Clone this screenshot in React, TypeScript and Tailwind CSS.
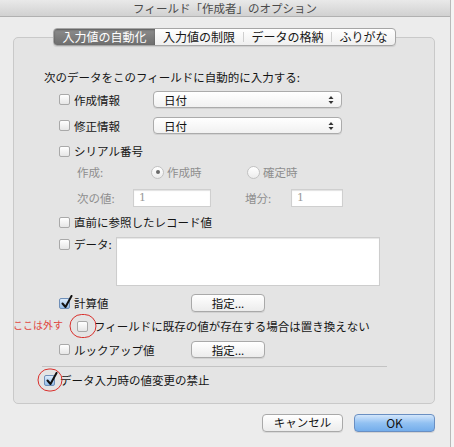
import React from "react";

const FONT = { fontFamily: '"Noto Sans CJK JP", "Noto Sans", sans-serif' };

function Check({ checked = false }: { checked?: boolean }) {
  return (
    <span
      className={
        "relative inline-block w-[11px] h-[11px] shrink-0 rounded-[2px] border " +
        (checked
          ? "border-[#6f8fb8] bg-linear-to-b from-[#dcebfb] to-[#93bdea]"
          : "border-[#a9a9a9] bg-linear-to-b from-white to-[#e6e6e6]")
      }
    >
      {checked && (
        <svg
          className="absolute left-[1px] top-[-4px]"
          width="12"
          height="14"
          viewBox="0 0 12 14"
        >
          <path d="M1.5 8.5 L4.5 12 L10.5 1" fill="none" stroke="#111" strokeWidth="2" strokeLinecap="round" strokeLinejoin="round" />
        </svg>
      )}
    </span>
  );
}

function Radio({ selected = false }: { selected?: boolean }) {
  return (
    <span className="relative inline-flex items-center justify-center w-[13px] h-[13px] shrink-0 rounded-full border border-[#c2c2c2] bg-linear-to-b from-white to-[#ececec]">
      {selected && <span className="w-[4px] h-[4px] rounded-full bg-[#6a6a6a]" />}
    </span>
  );
}

function Select({ value }: { value: string }) {
  return (
    <div className="flex items-center justify-between w-[189px] h-[17px] rounded-[4px] border border-[#ababab] bg-linear-to-b from-white to-[#f1f1f1] shadow-[0_1px_0_rgba(0,0,0,0.08)] pl-[10px] pr-[7px]">
      <span className="text-[11.5px] leading-[16px] text-[#111]">{value}</span>
      <svg width="6" height="10" viewBox="0 0 6 10">
        <path d="M3 1 L5.5 4 L0.5 4 Z" fill="#333" />
        <path d="M3 9 L5.5 6 L0.5 6 Z" fill="#333" />
      </svg>
    </div>
  );
}

function Field({ w }: { w: string }) {
  return (
    <div className={"h-[18px] bg-white border border-[#cfcfcf] shadow-[inset_0_1px_1px_rgba(0,0,0,0.12)] pl-[5px] flex items-center " + w}>
      <span className="text-[11px] text-[#9a9a9a]" style={{ fontFamily: '"DejaVu Serif", serif' }}>1</span>
    </div>
  );
}

function Btn({ label, w, h = "h-[18px]" }: { label: string; w: string; h?: string }) {
  return (
    <div className={"flex items-center justify-center rounded-[4px] border border-[#a9a9a9] bg-linear-to-b from-white to-[#ececec] shadow-[0_1px_0_rgba(0,0,0,0.08)] text-[11.5px] text-[#111] " + w + " " + h}>
      {label}
    </div>
  );
}

function Circle({ w, h }: { w: string; h: string }) {
  return (
    <span
      className={
        "absolute left-1/2 top-1/2 -translate-x-1/2 -translate-y-1/2 rounded-full border border-[#d9302c] " + w + " " + h
      }
    />
  );
}

export default function App() {
  return (
    <div className="w-[454px] h-[447px] bg-[#f4f4f4] text-[#151515] overflow-hidden" style={FONT}>
      <div className="w-[451px] h-[447px] bg-[#ececec] border-r border-[#b9b9b9] flex flex-col">
        {/* Title bar */}
        <div className="h-[17px] shrink-0 bg-linear-to-b from-[#e9e9e9] to-[#d1d1d1] border-b border-[#b1b1b1] flex items-center justify-center text-[11.5px] leading-[16px] text-[#4a4a4a]">
          フィールド「作成者」のオプション
        </div>

        {/* Tabs */}
        <div className="relative z-10 mt-[11px] -mb-[9px] ml-[53px] flex h-[18px] w-[343px] rounded-[4px] border border-[#a6a6a6] bg-linear-to-b from-white to-[#efefef] shadow-[0_1px_1px_rgba(0,0,0,0.1)] overflow-hidden text-[12px] leading-[16px]">
          <div className="w-[101px] flex items-center justify-center bg-linear-to-b from-[#8d8d8d] to-[#6e6e6e] text-white shadow-[inset_0_1px_2px_rgba(0,0,0,0.35)]">
            入力値の自動化
          </div>
          <div className="w-[88px] flex items-center justify-center text-[#161616]">入力値の制限</div>
          <div className="w-px my-[3px] bg-[#cfcfcf]" />
          <div className="w-[87px] flex items-center justify-center text-[#161616]">データの格納</div>
          <div className="w-px my-[3px] bg-[#cfcfcf]" />
          <div className="flex-1 flex items-center justify-center text-[#161616]">ふりがな</div>
        </div>

        {/* Group box */}
        <div className="ml-[13px] w-[422px] h-[367px] shrink-0 rounded-[5px] border border-[#c9c9c9] bg-[#e4e4e4] flex flex-col pt-[31px] text-[11.5px] leading-[16px]">
          <div className="h-[16px] ml-[30px]">次のデータをこのフィールドに自動的に入力する:</div>

          <div className="mt-[6px] h-[17px] ml-[45px] flex items-center">
            <Check />
            <span className="ml-[4px] w-[79px]">作成情報</span>
            <Select value="日付" />
          </div>
          <div className="mt-[9px] h-[17px] ml-[45px] flex items-center">
            <Check />
            <span className="ml-[4px] w-[79px]">修正情報</span>
            <Select value="日付" />
          </div>

          <div className="mt-[9px] h-[16px] ml-[45px] flex items-center">
            <Check />
            <span className="ml-[4px]">シリアル番号</span>
          </div>

          <div className="mt-[5px] h-[16px] ml-[63px] flex items-center text-[#8e8e8e]">
            <span className="w-[74px]">作成:</span>
            <div className="w-[96px] flex items-center">
              <Radio selected />
              <span className="ml-[3px]">作成時</span>
            </div>
            <div className="flex items-center">
              <Radio />
              <span className="ml-[3px]">確定時</span>
            </div>
          </div>

          <div className="mt-[9px] h-[18px] ml-[63px] flex items-center text-[#8e8e8e]">
            <span className="w-[56px]">次の値:</span>
            <Field w="w-[78px]" />
            <span className="ml-[34px] w-[46px]">増分:</span>
            <Field w="w-[52px]" />
          </div>

          <div className="mt-[7px] h-[16px] ml-[45px] flex items-center">
            <Check />
            <span className="ml-[4px]">直前に参照したレコード値</span>
          </div>

          <div className="mt-[7px] h-[49px] ml-[45px] flex items-start">
            <div className="h-[16px] -mt-px flex items-center">
              <Check />
              <span className="ml-[4px] w-[42px]">データ:</span>
            </div>
            <div className="w-[264px] h-[49px] bg-white border border-[#cdcdcd] shadow-[inset_0_1px_1px_rgba(0,0,0,0.1)]" />
          </div>

          <div className="mt-[8px] h-[18px] ml-[45px] flex items-center">
            <Check checked />
            <span className="ml-[4px] w-[117px]">計算値</span>
            <Btn label="指定..." w="w-[74px]" />
          </div>

          <div className="mt-[6px] h-[16px] -ml-px flex items-center">
            <span className="w-[50px] -mt-[3px] whitespace-nowrap text-[10px] leading-[14px] text-[#e0463f]">ここは外す</span>
            <span className="relative ml-[14px] flex items-center">
              <Check />
              <Circle w="w-[27px]" h="h-[24px]" />
            </span>
            <span className="ml-[6px] whitespace-nowrap">フィールドに既存の値が存在する場合は置き換えない</span>
          </div>

          <div className="mt-[7px] h-[17px] ml-[45px] flex items-center">
            <Check />
            <span className="ml-[4px] w-[117px]">ルックアップ値</span>
            <Btn label="指定..." w="w-[74px]" h="h-[17px]" />
          </div>

          <div className="mt-[8px] h-px ml-[28px] w-[345px] bg-[#c3c3c3]" />

          <div className="mt-[5px] h-[16px] ml-[30px] flex items-center">
            <span className="relative flex items-center">
              <Check checked />
              <Circle w="w-[25px]" h="h-[23px]" />
            </span>
            <span className="ml-[5px]">データ入力時の値変更の禁止</span>
          </div>
        </div>

        {/* Bottom buttons */}
        <div className="mt-[10px] ml-[13px] w-[422px] flex justify-end gap-[11px] text-[12px]">
          <Btn label="キャンセル" w="w-[81px]" />
          <div className="w-[81px] h-[18px] flex items-center justify-center rounded-[4px] border border-[#6a8fc2] bg-linear-to-b from-[#d3e6fb] via-[#92c1f2] to-[#74adeb] shadow-[0_1px_0_rgba(0,0,0,0.1)] text-[12px] text-[#111]">
            OK
          </div>
        </div>
      </div>
    </div>
  );
}
